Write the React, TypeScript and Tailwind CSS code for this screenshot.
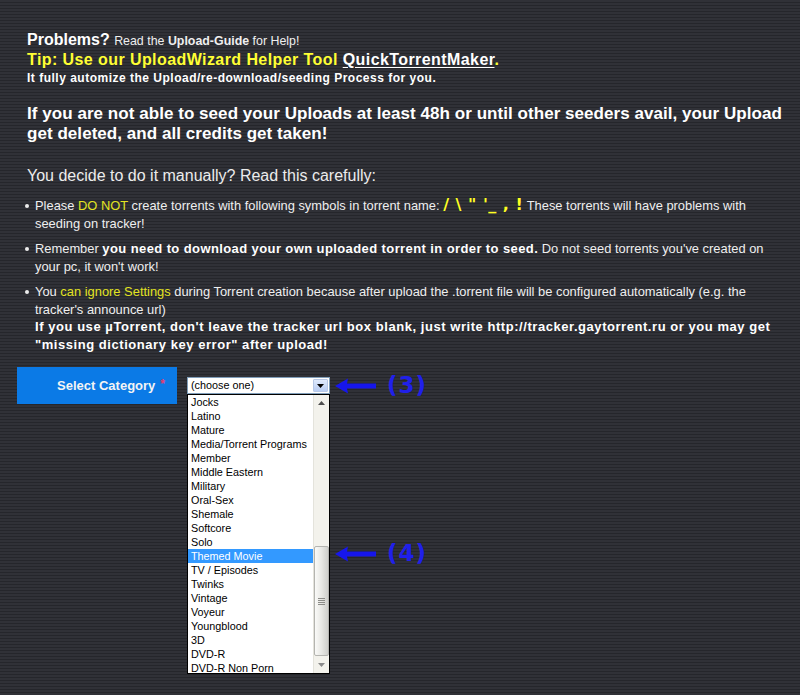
import React from 'react';

const categories = [
  'Jocks',
  'Latino',
  'Mature',
  'Media/Torrent Programs',
  'Member',
  'Middle Eastern',
  'Military',
  'Oral-Sex',
  'Shemale',
  'Softcore',
  'Solo',
  'Themed Movie',
  'TV / Episodes',
  'Twinks',
  'Vintage',
  'Voyeur',
  'Youngblood',
  '3D',
  'DVD-R',
  'DVD-R Non Porn',
];

const selected = 'Themed Movie';

const Arrow = () => (
  <svg width="42" height="18" viewBox="0 0 42 18" className="block shrink-0">
    <path d="M0 9 L13 1.5 L12 6.5 L41 6.5 L41 11.5 L12 11.5 L13 16.5 Z" fill="#1616ec" />
  </svg>
);

const Bullet = ({ children }: { children: React.ReactNode }) => (
  <li className="flex">
    <span className="-ml-[2px] mr-[6px] mt-[7px] h-[4px] w-[4px] shrink-0 rounded-full bg-[#ececec]" />
    <div>{children}</div>
  </li>
);

const Scrollbar = () => (
  <div className="flex w-[16px] shrink-0 flex-col border-l border-[#e4e3dc] bg-[#f3f2ec]">
    {/* up button */}
    <div className="flex h-[16px] items-center justify-center">
      <svg width="7" height="4" viewBox="0 0 7 4">
        <path d="M0 4 L3.5 0 L7 4 Z" fill="#4d4d4d" />
      </svg>
    </div>
    <div className="h-[135px]" />
    {/* thumb */}
    <div className="flex h-[110px] flex-col items-center justify-center rounded-[2px] border border-[#b4b4b0] bg-gradient-to-r from-[#fafaf8] via-[#e8e8e4] to-[#cfcfcb]">
      <div className="flex flex-col gap-[1px]">
        <div className="h-[1px] w-[7px] bg-[#8c8c88]" />
        <div className="h-[1px] w-[7px] bg-[#8c8c88]" />
        <div className="h-[1px] w-[7px] bg-[#8c8c88]" />
        <div className="h-[1px] w-[7px] bg-[#8c8c88]" />
      </div>
    </div>
    <div className="flex flex-1 items-center justify-center">
      <svg width="7" height="4" viewBox="0 0 7 4">
        <path d="M0 0 L3.5 4 L7 0 Z" fill="#8a8a8a" />
      </svg>
    </div>
  </div>
);

export default function App() {
  return (
    <div className="min-h-[695px] w-full bg-[repeating-linear-gradient(180deg,#303137_0px,#303137_2px,#25262b_2px,#25262b_3px)] font-['Liberation_Sans',Arial,sans-serif] text-[#efefef]">
      <div className="pl-[27px] pr-[12px] pt-[31px]">
        <div className="leading-[18px]">
          <span className="text-[16px] font-bold text-white">Problems?</span>{' '}
          <span className="text-[12.4px]">
            Read the <b>Upload-Guide</b> for Help!
          </span>
        </div>
        <div className="text-[16px] font-bold leading-[19px] tracking-[0.42px] text-[#ffff33]">
          Tip: Use our UploadWizard Helper Tool{' '}
          <span className="text-white underline underline-offset-2">QuickTorrentMaker</span>.
        </div>
        <div className="mt-[2px] text-[12px] font-bold leading-[15px] tracking-[0.5px] text-white">
          It fully automize the Upload/re-download/seeding Process for you.
        </div>

        <div className="-mr-[8px] mt-[18px] text-[17px] font-bold leading-[20px] tracking-[0.05px] text-white">
          If you are not able to seed your Uploads at least 48h or until other seeders avail, your Upload get
          deleted, and all credits get taken!
        </div>

        <div className="mt-[22px] text-[16px] leading-[20px] text-[#ececec]">
          You decide to do it manually? Read this carefully:
        </div>

        <ul className="mt-[11px] flex flex-col gap-[8px] text-[12.9px] leading-[17.5px]">
          <Bullet>
            Please <span className="text-[#e3e322]">DO NOT</span> create torrents with following symbols in torrent
            name:{' '}
            <span className="font-['DejaVu_Sans',sans-serif] text-[16px] font-bold leading-[14px] tracking-[0.5px] text-[#ffff22]">
              / \ " '_ , !
            </span>{' '}
            These torrents will have problems with seeding on tracker!
          </Bullet>
          <Bullet>
            Remember{' '}
            <b className="text-[13px] tracking-[0.4px] text-white">
              you need to download your own uploaded torrent in order to seed.
            </b>{' '}
            Do not seed torrents you've created on your pc, it won't work!
          </Bullet>
          <Bullet>
            You <span className="text-[#e3e322]">can ignore Settings</span> during Torrent creation because after
            upload the .torrent file will be configured automatically (e.g. the tracker's announce url)
            <div className="text-[13px] font-bold tracking-[0.55px] text-white">
              If you use µTorrent, don't leave the tracker url box blank, just write http://tracker.gaytorrent.ru or
              you may get "missing dictionary key error" after upload!
            </div>
          </Bullet>
        </ul>
      </div>

      <div className="mt-[14px] flex items-start pl-[17px]">
        <div className="flex h-[37px] w-[160px] items-center justify-end bg-[#0b7ae6] pr-[12px] text-[13px] font-bold text-[#f4f4f4]">
          Select Category
          <span className="-mt-[4px] ml-[5px] text-[12px] text-[#e63a6e]">*</span>
        </div>

        <div className="ml-[10px] mt-[10px] flex w-[143px] flex-col">
          {/* select box */}
          <div className="flex h-[17px] border border-[#7f9db9] bg-white">
            <div className="flex-1 pl-[3px] text-[10.8px] leading-[15px] text-black">(choose one)</div>
            <div className="m-[1px] flex w-[15px] items-center justify-center rounded-[1px] border border-[#b7c8e6] bg-gradient-to-b from-[#dfeafc] to-[#b9cdf3]">
              <svg width="7" height="4" viewBox="0 0 7 4">
                <path d="M0 0 L3.5 4 L7 0 Z" fill="#000" />
              </svg>
            </div>
          </div>
          {/* open list */}
          <div className="flex h-[280px] border border-black bg-white">
            <div className="flex-1 overflow-hidden">
              {categories.map((c) => (
                <div
                  key={c}
                  className={
                    c === selected
                      ? 'h-[14px] bg-[#3399ff] pl-[3px] text-[10.8px] leading-[14px] text-white'
                      : 'h-[14px] pl-[3px] text-[10.8px] leading-[14px] text-black'
                  }
                >
                  {c}
                </div>
              ))}
            </div>
            <Scrollbar />
          </div>
        </div>

        <div className="ml-[5px] flex flex-col font-['DejaVu_Sans',sans-serif]">
          <div className="mt-[9px] flex h-[19px] items-center">
            <Arrow />
            <span className="ml-[10px] text-[23px] font-bold leading-[19px] tracking-[1px] text-[#2020ea]">(3)</span>
          </div>
          <div className="mt-[149px] flex h-[19px] items-center">
            <Arrow />
            <span className="ml-[10px] text-[23px] font-bold leading-[19px] tracking-[1px] text-[#2020ea]">(4)</span>
          </div>
        </div>
      </div>
    </div>
  );
}
